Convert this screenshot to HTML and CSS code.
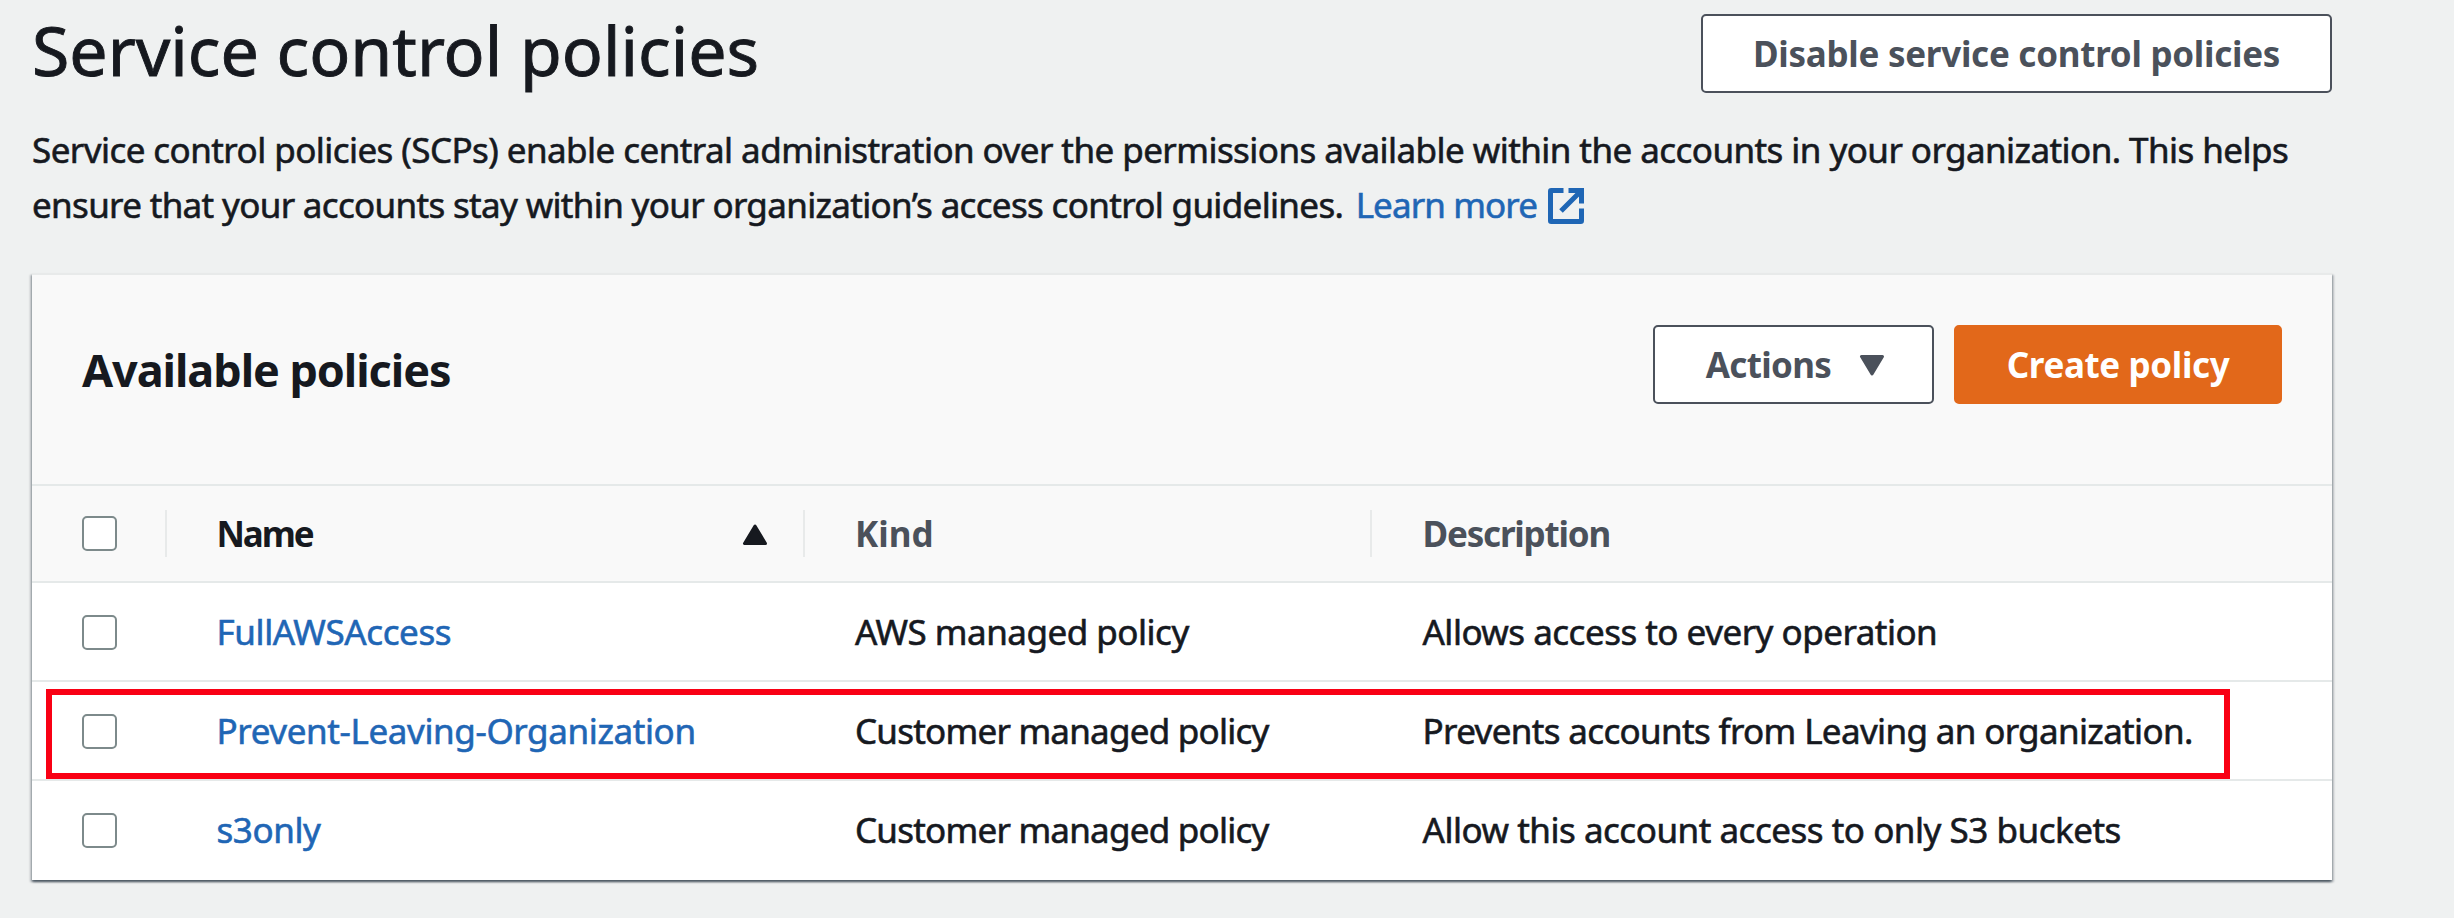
FILE: index.html
```html
<!DOCTYPE html>
<html lang="en">
<head>
<meta charset="utf-8">
<title>Service control policies</title>
<link rel="stylesheet" href="styles.css">
</head>
<body>
<main class="page">
  <header class="page-header">
    <h1 class="page-title">Service control policies</h1>
    <button class="btn btn-disable">Disable service control policies</button>
  </header>
  <p class="intro"><span class="intro-first">Service control policies (SCPs) enable central administration over the permissions available within the accounts in your organization. This helps</span><br>ensure that your accounts stay within your organization’s access control guidelines. <a class="learn-more" href="#">Learn more<svg class="external-icon" viewBox="0 0 36 36" aria-hidden="true"><path d="M15.5 2.5H3.2a.7.7 0 0 0-.7.7v29.6c0 .4.3.7.7.7h29.6c.4 0 .7-.3.7-.7V20.5M20.5 2.5h13v13M33 3 13 23"/></svg></a></p>

  <section class="panel">
    <div class="panel-header">
      <h2 class="panel-title">Available policies</h2>
      <div class="panel-actions">
        <button class="btn btn-actions">Actions<svg class="caret" viewBox="0 0 26 21" aria-hidden="true"><path d="M2.5 1.5h21L13 19z"/></svg></button>
        <button class="btn btn-primary">Create policy</button>
      </div>
    </div>
    <div class="row row-head">
      <div class="cell cell-check"><span class="checkbox"></span></div>
      <div class="cell cell-name"><span class="t-name">Name</span><svg class="sort" viewBox="0 0 26 21" aria-hidden="true"><path d="M2.5 19.5h21L13 2z"/></svg></div>
      <div class="cell cell-kind"><span class="t-kind">Kind</span></div>
      <div class="cell cell-desc"><span class="t-desc">Description</span></div>
    </div>
    <div class="row">
      <div class="cell cell-check"><span class="checkbox"></span></div>
      <div class="cell cell-name"><a class="link" href="#">FullAWSAccess</a></div>
      <div class="cell cell-kind"><span class="t-aws">AWS managed policy</span></div>
      <div class="cell cell-desc"><span class="t-every">Allows access to every operation</span></div>
    </div>
    <div class="row row-marked">
      <div class="cell cell-check"><span class="checkbox"></span></div>
      <div class="cell cell-name"><a class="link t-prevent" href="#">Prevent-Leaving-Organization</a></div>
      <div class="cell cell-kind"><span class="t-customer">Customer managed policy</span></div>
      <div class="cell cell-desc"><span class="t-leaving">Prevents accounts from Leaving an organization.</span></div>
      <span class="marker"></span>
    </div>
    <div class="row">
      <div class="cell cell-check"><span class="checkbox"></span></div>
      <div class="cell cell-name"><a class="link" href="#">s3only</a></div>
      <div class="cell cell-kind"><span class="t-customer">Customer managed policy</span></div>
      <div class="cell cell-desc"><span class="t-buckets">Allow this account access to only S3 buckets</span></div>
    </div>
  </section>
</main>
</body>
</html>
```

FILE: styles.css
```css
* { box-sizing: border-box; }

body {
  margin: 0;
  height: 918px;
  overflow: hidden;
  background: #eff1f1;
  color: #16191f;
  font: 400 35px/55px "Noto Sans", "Open Sans", sans-serif;
  -webkit-text-stroke: 0.6px currentColor;
}

.page { width: 2300px; margin-left: 32px; padding-top: 14px; }

.page-header { display: flex; justify-content: space-between; height: 108px; }

.page-title {
  margin: 0;
  font-size: 68px;
  font-weight: 400;
  line-height: 72px;
  letter-spacing: 0;
  -webkit-text-stroke-width: 0.9px;
}

.btn {
  display: flex;
  align-items: center;
  justify-content: center;
  height: 79px;
  padding: 0;
  border: 2px solid #4b515b;
  border-radius: 5px;
  background: #fff;
  color: #4b515b;
  font: 700 35px/55px "Noto Sans", "Open Sans", sans-serif;
  white-space: nowrap;
  -webkit-text-stroke: 0;
}

.btn-disable { width: 631px; letter-spacing: -0.27px; }

.intro { margin: 0; letter-spacing: -0.668px; white-space: nowrap; }
.intro-first { letter-spacing: -0.561px; }

.learn-more { margin-left: 4px; color: #1f66b5; letter-spacing: -0.895px; text-decoration: none; }

.external-icon {
  width: 36px;
  height: 36px;
  margin-left: 11px;
  vertical-align: -6px;
  fill: none;
  stroke: currentColor;
  stroke-width: 5;
}

.panel {
  margin-top: 41px;
  border-top: 2px solid #e8eaea;
  background: #fff;
  box-shadow: 0 2px 2px rgba(0, 20, 35, 0.5), 2px 2px 2px rgba(0, 20, 35, 0.2), -2px 2px 2px rgba(0, 20, 35, 0.2);
}

.panel-header {
  display: flex;
  justify-content: space-between;
  height: 211px;
  padding: 50px 50px 0;
  border-bottom: 2px solid #e5e9e9;
  background: #f9f9f9;
}

.panel-title {
  margin: 0;
  padding-top: 17px;
  font-size: 45px;
  font-weight: 700;
  line-height: 55px;
  letter-spacing: -1.06px;
  -webkit-text-stroke: 0;
}

.panel-actions { display: flex; gap: 20px; }
.btn-actions { width: 281px; padding-left: 4px; letter-spacing: -0.68px; }
.btn-primary { width: 328px; border-color: #e2681a; background: #e2681a; color: #fff; letter-spacing: -0.37px; }

.caret, .sort { width: 26px; height: 21px; fill: currentColor; stroke: currentColor; stroke-width: 3; stroke-linejoin: round; }
.caret { margin: 2px 0 0 28px; }

.row {
  display: grid;
  grid-template-columns: 135px 638px 567px 960px;
  height: 99px;
  padding-bottom: 2px;
}
.row + .row { box-shadow: inset 0 -2px #e5e9e9; }
.row:last-child { box-shadow: none; }
.row-head {
  height: 97px;
  border-bottom: 2px solid #e5e9e9;
  background: #f9f9f9;
  color: #4b515b;
  font-weight: 700;
  padding: 0;
  -webkit-text-stroke: 0;
}
.row-marked { position: relative; }

.cell { display: flex; align-items: center; white-space: nowrap; }
.cell-check { padding: 2px 0 0 50px; }
.cell-name { padding-left: 49.5px; }
.cell-kind { padding-left: 50px; }
.cell-desc { padding-left: 50.5px; }

.row-head .cell { height: 47px; margin-top: 24px; padding-top: 0; padding-bottom: 0; border-right: 2px solid #e8eaea; }
.row-head .cell-name { justify-content: space-between; padding-right: 35px; color: #16191f; }
.row-head .cell-desc { border-right: 0; }
.sort { margin-top: 1px; }

.checkbox { width: 35px; height: 35px; border: 2px solid #7d8a8b; border-radius: 5px; background: #fff; }

.link { color: #1f66b5; text-decoration: none; letter-spacing: -0.4px; }
.t-prevent { letter-spacing: -0.38px; }
.t-name { letter-spacing: -2.1px; }
.t-kind { letter-spacing: 0; }
.t-desc { letter-spacing: -1.19px; }
.t-aws { letter-spacing: -0.5px; }
.t-customer { letter-spacing: -0.77px; }
.t-every { letter-spacing: -0.51px; }
.t-leaving { letter-spacing: -0.65px; }
.t-buckets { letter-spacing: -0.48px; }

/* Highlight drawn over the row */
.marker { position: absolute; top: 7px; left: 14px; width: 2184px; height: 90px; border: 6px solid #f90014; }
```
